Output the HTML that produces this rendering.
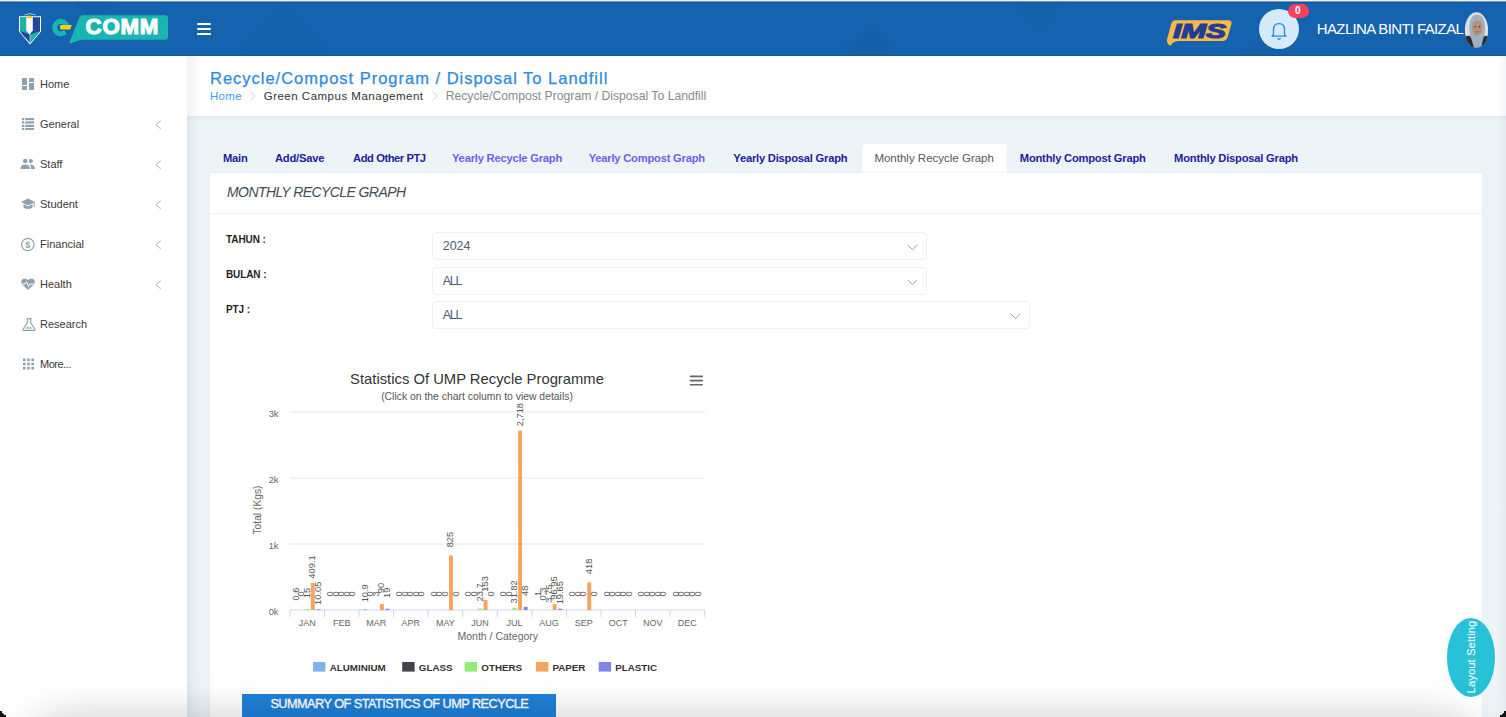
<!DOCTYPE html><html><head><meta charset="utf-8"><style>
*{margin:0;padding:0;box-sizing:border-box}
html,body{width:1506px;height:717px;overflow:hidden;background:#edf4f8;font-family:"Liberation Sans",sans-serif;position:relative}
.abs{position:absolute}
.t{position:absolute;white-space:nowrap;line-height:1}
#hdr{position:absolute;left:0;top:0;width:1506px;height:56px;background:#1563ae;border-top:1px solid #faf4e6;overflow:hidden}
#hdr .tl{position:absolute;left:0;top:0;width:100%;height:1px;background:#7c9cc2}
#hdr .tl2{position:absolute;left:0;top:1px;width:100%;height:1px;background:#0b58a9}
#hdr .bot{position:absolute;left:0;bottom:0;width:100%;height:1px;background:#0d58a6}
#hdr .t{margin-top:-1px}
#hdr .abs{margin-top:-1px}
.dia{position:absolute;background:rgba(10,60,120,.08);transform:rotate(45deg)}
#side{position:absolute;left:0;top:56px;width:187px;height:661px;background:#fff}
#side .t,#side .abs{margin-top:-56px}
#ptitle{position:absolute;left:187px;top:56px;width:1319px;height:60px;background:#fff}
#card{position:absolute;left:210px;top:173px;width:1272px;height:544px;background:#fff;box-shadow:0 -1px 2px rgba(60,80,100,.05)}
.sel{position:absolute;left:432px;height:28px;border:1px solid #eef1f4;border-radius:4px;background:#fff}
</style></head><body><div id="hdr"><div class="tl"></div><div class="tl2"></div><div class="dia" style="left:70px;top:-40px;width:50px;height:50px"></div><div class="dia" style="left:250px;top:20px;width:70px;height:70px;opacity:.5"></div><div class="dia" style="left:853px;top:29px;width:35px;height:35px"></div><div class="dia" style="left:1010px;top:-45px;width:60px;height:60px;opacity:.5"></div><div class="dia" style="left:1240px;top:40px;width:50px;height:50px"></div><svg class="abs" style="left:17px;top:12px" width="26" height="34" viewBox="0 0 26 34">
<path d="M2 4.2 L24 4.2 L24 19.5 L13 32.6 L2 19.5 Z" fill="#fff"/>
<path d="M3 5.2 L23 5.2 L23 19.2 L13 31 L3 19.2 Z" fill="#24459b"/>
<path d="M3 5.2 L9.2 5.2 L9.2 18.5 L13 22.5 L3 19.2 Z" fill="#1ab3a8"/>
<path d="M13 22.5 L23 19.2 L13 31 Z" fill="#1ab3a8"/>
<path d="M3 19.2 L13 22.5 L8 25.5 Z" fill="#24459b"/>
<path d="M9.2 5.2 L15.8 5.2 L15.8 18.5 L12.5 22.8 L9.2 18.5 Z" fill="#fff"/>
<path d="M13 22.5 L13 31" stroke="#fff" stroke-width="0.5"/>
<ellipse cx="12.5" cy="5" rx="2.8" ry="1.5" fill="#f5d21c"/>
<path d="M7.5 3.2 Q13 0.2 18.5 2.8" stroke="#a8d4ea" stroke-width="0.9" fill="none"/>
</svg><svg class="abs" style="left:50px;top:13px" width="122" height="33" viewBox="0 0 122 33">
<path d="M16.27 11.69 A6.2 6.2 0 1 0 13.71 20.07" stroke="#19b5b0" stroke-width="5" fill="none" stroke-linecap="round"/>
<path d="M10.5 12.1 L21.8 12.1 L20.2 16.4 L10.5 16.4 Q9.2 14.25 10.5 12.1Z" fill="#f7d10d"/>
<path d="M29.3 4.6 Q30.3 2.2 33 2.2 L115 2.2 Q118 2.2 118 5.2 L118 23.8 Q118 26.8 115 26.8 L32 26.8 Q26 28 21 30.2 Q18.5 31 19.8 28.5 Z" fill="#19b5b0"/>
</svg><div class="t" style="left:85.60px;top:16.32px;font-size:22.3px;color:#fff;font-weight:bold;font-style:normal;letter-spacing:0.7px;-webkit-text-stroke:1.1px #fff;">COMM</div><div class="abs" style="left:196.5px;top:22.6px;width:14px;height:2px;background:#fff;border-radius:1px"></div><div class="abs" style="left:196.5px;top:27.6px;width:14px;height:2px;background:#fff;border-radius:1px"></div><div class="abs" style="left:196.5px;top:32.6px;width:14px;height:2px;background:#fff;border-radius:1px"></div><svg class="abs" style="left:1165px;top:19px" width="68" height="28" viewBox="0 0 68 28">
<path d="M10 1.2 L63 1.2 Q67.5 1.2 66.3 5.5 L62.5 18.5 Q61.3 22 57.5 22 L13 22 Q8 22.5 6.5 25.5 Q5 27.5 3.5 25.5 Q1 22.5 2.5 18.5 L6.2 5 Q7.2 1.2 10 1.2Z" fill="#f8b945"/>
<text x="8" y="18.6" font-family="Liberation Sans" font-weight="bold" font-style="italic" font-size="19.5" fill="#1f3f95" stroke="#1f3f95" stroke-width="1.2" textLength="53" lengthAdjust="spacingAndGlyphs">IMS</text>
</svg><div class="abs" style="left:1258.7px;top:9.4px;width:40px;height:40px;border-radius:50%;background:#d5ebfc"></div><svg class="abs" style="left:1270px;top:21px" width="18" height="20" viewBox="0 0 18 20">
<path d="M3.5 13.8 L3.5 8.5 Q3.5 2.6 9 2.6 Q14.5 2.6 14.5 8.5 L14.5 13.8 L16 15.2 L2 15.2 Z" stroke="#2a86e2" stroke-width="1.3" fill="none" stroke-linejoin="round"/>
<path d="M7.4 17.2 L9 18.4 L10.6 17.2" stroke="#2a86e2" stroke-width="1.2" fill="none"/>
</svg><div class="abs" style="left:1287.5px;top:3.5px;width:21.5px;height:14px;border-radius:7px;background:#f4415f"></div><div class="t" style="left:1295.00px;top:6.34px;font-size:10px;color:#fff;font-weight:bold;font-style:normal;letter-spacing:0px;">0</div><div class="t" style="left:1316.80px;top:21.20px;font-size:15px;color:#fff;font-weight:normal;font-style:normal;letter-spacing:-0.64px;">HAZLINA BINTI FAIZAL</div><svg class="abs" style="left:1463.7px;top:11.5px" width="25" height="36" viewBox="0 0 25 36">
<defs><clipPath id="av"><ellipse cx="12.5" cy="18" rx="11.6" ry="17.8"/></clipPath></defs>
<g clip-path="url(#av)">
<rect width="25" height="36" fill="#e2dfdc"/>
<path d="M0 36 L0 25 Q6 22 12 26 L13 36Z" fill="#2a2a2c"/>
<path d="M25 36 L25 25 Q19 22 13 26 L12 36Z" fill="#2a2a2c"/>
<path d="M9 36 L6 26 L5.2 14 Q6 2.5 13 2.5 Q20.5 2.5 21 14 L20.5 26 L17.5 36Z" fill="#9fb0c6"/>
<path d="M0 36 L0 26 Q4 23.5 7 25.5 L10 36Z" fill="#2a2a2c"/><path d="M25 36 L25 26 Q21 23.5 19.5 25.5 L17 36Z" fill="#2a2a2c"/>
<ellipse cx="13.2" cy="15.6" rx="5.2" ry="8" fill="#b78f76"/>
<path d="M8 11 Q13 6 18.5 11 L18.5 8 Q13 4 8 8Z" fill="#9fb0c6"/>
<circle cx="11.2" cy="14.8" r="0.7" fill="#3a2a22"/><circle cx="15.4" cy="14.8" r="0.7" fill="#3a2a22"/>
<path d="M11.3 19.6 Q13.2 20.8 15.1 19.6" stroke="#7a4a3a" stroke-width="0.6" fill="none"/>
</g></svg><div class="bot"></div></div>
<div id="side"><svg class="abs" style="left:21.5px;top:78px" width="15" height="14" viewBox="0 0 15 14" overflow="visible"><rect x="0" y="0" width="5" height="7" fill="#8fa2ac"/><rect x="7" y="0" width="5" height="4" fill="#8fa2ac"/><rect x="0" y="8" width="5" height="4" fill="#8fa2ac"/><rect x="7" y="5" width="5" height="7" fill="#8fa2ac"/></svg><div class="t" style="left:40.00px;top:78.89px;font-size:11px;color:#3a3a3a;font-weight:normal;font-style:normal;letter-spacing:0px;">Home</div><svg class="abs" style="left:21.5px;top:118px" width="15" height="14" viewBox="0 0 15 14" overflow="visible"><rect x="0" y="0" width="2.2" height="2.2" fill="#8fa2ac"/><rect x="3.2" y="0" width="8.8" height="2.2" fill="#8fa2ac"/><rect x="0" y="3.4" width="2.2" height="2.2" fill="#8fa2ac"/><rect x="3.2" y="3.4" width="8.8" height="2.2" fill="#8fa2ac"/><rect x="0" y="6.8" width="2.2" height="2.2" fill="#8fa2ac"/><rect x="3.2" y="6.8" width="8.8" height="2.2" fill="#8fa2ac"/><rect x="0" y="10" width="2.2" height="2" fill="#8fa2ac"/><rect x="3.2" y="10" width="8.8" height="2" fill="#8fa2ac"/></svg><div class="t" style="left:40.00px;top:118.89px;font-size:11px;color:#3a3a3a;font-weight:normal;font-style:normal;letter-spacing:0px;">General</div><svg class="abs" style="left:155px;top:119.5px" width="7" height="10" viewBox="0 0 7 10"><path d="M5.8 0.6 L1 4.8 L5.8 9" stroke="#9aabb5" stroke-width="0.9" fill="none"/></svg><svg class="abs" style="left:20.7px;top:158px" width="15" height="14" viewBox="0 0 15 14" overflow="visible"><circle cx="4.2" cy="3" r="2.3" fill="#8fa2ac"/><circle cx="9.8" cy="3" r="2.1" fill="#8fa2ac"/><path d="M-0.5 11 Q-0.5 6.5 4.2 6.5 Q8.9 6.5 8.9 11Z" fill="#8fa2ac"/><path d="M9 6.5 Q14 6.5 14 11 L10 11 Q10 8 9 6.5Z" fill="#8fa2ac"/></svg><div class="t" style="left:40.00px;top:158.89px;font-size:11px;color:#3a3a3a;font-weight:normal;font-style:normal;letter-spacing:0px;">Staff</div><svg class="abs" style="left:155px;top:159.5px" width="7" height="10" viewBox="0 0 7 10"><path d="M5.8 0.6 L1 4.8 L5.8 9" stroke="#9aabb5" stroke-width="0.9" fill="none"/></svg><svg class="abs" style="left:20.7px;top:198px" width="15" height="14" viewBox="0 0 15 14" overflow="visible"><path d="M7 0.5 L14 4 L7 7.5 L0 4Z" fill="#8fa2ac"/><path d="M2.5 6 L2.5 9.5 Q7 12.5 11.5 9.5 L11.5 6 L7 8.5Z" fill="#8fa2ac"/><rect x="12.8" y="4" width="0.9" height="5" fill="#8fa2ac"/></svg><div class="t" style="left:40.00px;top:198.89px;font-size:11px;color:#3a3a3a;font-weight:normal;font-style:normal;letter-spacing:0px;">Student</div><svg class="abs" style="left:155px;top:199.5px" width="7" height="10" viewBox="0 0 7 10"><path d="M5.8 0.6 L1 4.8 L5.8 9" stroke="#9aabb5" stroke-width="0.9" fill="none"/></svg><svg class="abs" style="left:20.7px;top:238px" width="15" height="14" viewBox="0 0 15 14" overflow="visible"><circle cx="6.8" cy="6.5" r="6.2" fill="none" stroke="#8fa2ac" stroke-width="1.3"/><text x="6.8" y="9.7" font-size="9" text-anchor="middle" fill="#8fa2ac" font-family="Liberation Sans" font-weight="bold">$</text></svg><div class="t" style="left:40.00px;top:238.89px;font-size:11px;color:#3a3a3a;font-weight:normal;font-style:normal;letter-spacing:0px;">Financial</div><svg class="abs" style="left:155px;top:239.5px" width="7" height="10" viewBox="0 0 7 10"><path d="M5.8 0.6 L1 4.8 L5.8 9" stroke="#9aabb5" stroke-width="0.9" fill="none"/></svg><svg class="abs" style="left:20.7px;top:278px" width="15" height="14" viewBox="0 0 15 14" overflow="visible"><path d="M7 12 L1.2 6.5 Q-1 3.5 1.5 1.2 Q4.5 -0.8 7 2.2 Q9.5 -0.8 12.5 1.2 Q15 3.5 12.8 6.5Z" fill="#8fa2ac"/><path d="M0 6 L4 6 L5.5 3.8 L7.5 8.5 L9 6 L14 6" stroke="#fff" stroke-width="1" fill="none"/></svg><div class="t" style="left:40.00px;top:278.89px;font-size:11px;color:#3a3a3a;font-weight:normal;font-style:normal;letter-spacing:0px;">Health</div><svg class="abs" style="left:155px;top:279.5px" width="7" height="10" viewBox="0 0 7 10"><path d="M5.8 0.6 L1 4.8 L5.8 9" stroke="#9aabb5" stroke-width="0.9" fill="none"/></svg><svg class="abs" style="left:21.5px;top:318px" width="15" height="14" viewBox="0 0 15 14" overflow="visible"><path d="M4.5 0.6 L9.5 0.6 M5.3 0.6 L5.3 4.8 L1 11.2 Q0.7 12.4 2 12.4 L12 12.4 Q13.3 12.4 13 11.2 L8.7 4.8 L8.7 0.6" stroke="#8fa2ac" stroke-width="1.1" fill="none"/><path d="M3.5 10.5 L5.5 8.5 L7 10 L8.5 8.8 L10.5 10.5Z" fill="#8fa2ac"/></svg><div class="t" style="left:40.00px;top:318.89px;font-size:11px;color:#3a3a3a;font-weight:normal;font-style:normal;letter-spacing:0px;">Research</div><svg class="abs" style="left:21.5px;top:358px" width="15" height="14" viewBox="0 0 15 14" overflow="visible"><rect x="1.0" y="0.5" width="2.6" height="2.6" fill="#8fa2ac"/><rect x="5.2" y="0.5" width="2.6" height="2.6" fill="#8fa2ac"/><rect x="9.4" y="0.5" width="2.6" height="2.6" fill="#8fa2ac"/><rect x="1.0" y="4.7" width="2.6" height="2.6" fill="#8fa2ac"/><rect x="5.2" y="4.7" width="2.6" height="2.6" fill="#8fa2ac"/><rect x="9.4" y="4.7" width="2.6" height="2.6" fill="#8fa2ac"/><rect x="1.0" y="8.9" width="2.6" height="2.6" fill="#8fa2ac"/><rect x="5.2" y="8.9" width="2.6" height="2.6" fill="#8fa2ac"/><rect x="9.4" y="8.9" width="2.6" height="2.6" fill="#8fa2ac"/></svg><div class="t" style="left:40.00px;top:358.89px;font-size:11px;color:#3a3a3a;font-weight:normal;font-style:normal;letter-spacing:-0.5px;">More...</div></div>
<div id="ptitle"></div>
<div class="abs" style="left:187px;top:116px;width:1319px;height:4px;background:linear-gradient(rgba(90,110,130,.07),rgba(90,110,130,0))"></div>
<div class="t" style="left:210.00px;top:69.63px;font-size:16.5px;color:#2a8be2;font-weight:normal;font-style:normal;letter-spacing:0.99px;-webkit-text-stroke:0.25px #2a8be2;">Recycle/Compost Program / Disposal To Landfill</div>
<div class="t" style="left:210.00px;top:90.87px;font-size:11.5px;color:#3b9cf1;font-weight:normal;font-style:normal;letter-spacing:0.3px;">Home</div>
<svg class="abs" style="left:250px;top:91px" width="6" height="10" viewBox="0 0 6 10"><path d="M1 1 L4.8 5 L1 9" stroke="#c9ced3" stroke-width="0.9" fill="none"/></svg>
<div class="t" style="left:263.70px;top:90.87px;font-size:11.5px;color:#333;font-weight:normal;font-style:normal;letter-spacing:0.5px;">Green Campus Management</div>
<svg class="abs" style="left:432px;top:91px" width="6" height="10" viewBox="0 0 6 10"><path d="M1 1 L4.8 5 L1 9" stroke="#c9ced3" stroke-width="0.9" fill="none"/></svg>
<div class="t" style="left:445.70px;top:90.27px;font-size:12.2px;color:#858a8f;font-weight:normal;font-style:normal;letter-spacing:0px;">Recycle/Compost Program / Disposal To Landfill</div>
<div class="abs" style="left:861.6px;top:144px;width:145px;height:30px;background:#fff;border-radius:4px 4px 0 0"></div>
<div class="t" style="left:222.90px;top:152.92px;font-size:11.2px;color:#1e209c;font-weight:bold;font-style:normal;letter-spacing:-0.22px;">Main</div>
<div class="t" style="left:275.00px;top:152.92px;font-size:11.2px;color:#1e209c;font-weight:bold;font-style:normal;letter-spacing:-0.22px;">Add/Save</div>
<div class="t" style="left:353.10px;top:152.92px;font-size:11.2px;color:#1e209c;font-weight:bold;font-style:normal;letter-spacing:-0.45px;">Add Other PTJ</div>
<div class="t" style="left:452.00px;top:152.92px;font-size:11.2px;color:#705ee6;font-weight:bold;font-style:normal;letter-spacing:-0.22px;">Yearly Recycle Graph</div>
<div class="t" style="left:588.70px;top:152.92px;font-size:11.2px;color:#705ee6;font-weight:bold;font-style:normal;letter-spacing:-0.22px;">Yearly Compost Graph</div>
<div class="t" style="left:733.30px;top:152.92px;font-size:11.2px;color:#1e209c;font-weight:bold;font-style:normal;letter-spacing:-0.22px;">Yearly Disposal Graph</div>
<div class="t" style="left:1019.80px;top:152.92px;font-size:11.2px;color:#1e209c;font-weight:bold;font-style:normal;letter-spacing:-0.22px;">Monthly Compost Graph</div>
<div class="t" style="left:1174.10px;top:152.92px;font-size:11.2px;color:#1e209c;font-weight:bold;font-style:normal;letter-spacing:-0.22px;">Monthly Disposal Graph</div>
<div class="t" style="left:874.40px;top:152.57px;font-size:11.5px;color:#4f5766;font-weight:normal;font-style:normal;letter-spacing:0px;">Monthly Recycle Graph</div>
<div id="card"></div>
<div class="abs" style="left:210px;top:213px;width:1272px;height:1px;background:#f1f3f5"></div>
<div class="t" style="left:227.00px;top:185.45px;font-size:14px;color:#3f4b55;font-weight:normal;font-style:italic;letter-spacing:-0.58px;">MONTHLY RECYCLE GRAPH</div>
<div class="t" style="left:226.00px;top:235.23px;font-size:10px;color:#1f1f1f;font-weight:bold;font-style:normal;letter-spacing:-0.1px;">TAHUN :</div>
<div class="t" style="left:226.00px;top:269.94px;font-size:10px;color:#1f1f1f;font-weight:bold;font-style:normal;letter-spacing:-0.1px;">BULAN :</div>
<div class="t" style="left:226.00px;top:304.54px;font-size:10px;color:#1f1f1f;font-weight:bold;font-style:normal;letter-spacing:-0.1px;">PTJ :</div>
<div class="sel" style="top:232px;width:494.5px"></div><div class="t" style="left:442.70px;top:239.82px;font-size:12.5px;color:#4d5c77;font-weight:normal;font-style:normal;letter-spacing:0px;">2024</div><svg class="abs" style="left:907.0px;top:244px" width="11" height="7" viewBox="0 0 11 7"><path d="M0.6 0.8 L5.5 5.6 L10.4 0.8" stroke="#9ba3ad" stroke-width="1" fill="none"/></svg>
<div class="sel" style="top:267px;width:494.5px"></div><div class="t" style="left:442.70px;top:274.82px;font-size:12.5px;color:#4d5c77;font-weight:normal;font-style:normal;letter-spacing:-1.3px;">ALL</div><svg class="abs" style="left:907.0px;top:279px" width="11" height="7" viewBox="0 0 11 7"><path d="M0.6 0.8 L5.5 5.6 L10.4 0.8" stroke="#9ba3ad" stroke-width="1" fill="none"/></svg>
<div class="sel" style="top:301.3px;width:597.5px"></div><div class="t" style="left:442.70px;top:309.12px;font-size:12.5px;color:#4d5c77;font-weight:normal;font-style:normal;letter-spacing:-1.3px;">ALL</div><svg class="abs" style="left:1010.0px;top:313.3px" width="11" height="7" viewBox="0 0 11 7"><path d="M0.6 0.8 L5.5 5.6 L10.4 0.8" stroke="#9ba3ad" stroke-width="1" fill="none"/></svg>
<svg class="abs" style="left:0;top:0" width="1506" height="717" viewBox="0 0 1506 717" font-family="Liberation Sans"><text x="477" y="383.9" text-anchor="middle" font-size="14.8" fill="#333">Statistics Of UMP Recycle Programme</text><text x="477" y="399.8" text-anchor="middle" font-size="10.4" fill="#555">(Click on the chart column to view details)</text><rect x="689.6" y="375.5" width="13.5" height="1.7" rx="0.8" fill="#666"/><rect x="689.6" y="379.7" width="13.5" height="1.7" rx="0.8" fill="#666"/><rect x="689.6" y="383.9" width="13.5" height="1.7" rx="0.8" fill="#666"/><rect x="290" y="411.5" width="415" height="1" fill="#e6e6e6"/><text x="278.5" y="416.5" text-anchor="end" font-size="9.3" fill="#666">3k</text><rect x="290" y="477.5" width="415" height="1" fill="#e6e6e6"/><text x="278.5" y="482.5" text-anchor="end" font-size="9.3" fill="#666">2k</text><rect x="290" y="543.5" width="415" height="1" fill="#e6e6e6"/><text x="278.5" y="548.5" text-anchor="end" font-size="9.3" fill="#666">1k</text><text x="278.5" y="614.5" text-anchor="end" font-size="9.3" fill="#666">0k</text><rect x="290" y="609.5" width="415" height="1" fill="#ccd6eb"/><rect x="289.40" y="610" width="1" height="7" fill="#ccd6eb"/><rect x="323.96" y="610" width="1" height="7" fill="#ccd6eb"/><rect x="358.52" y="610" width="1" height="7" fill="#ccd6eb"/><rect x="393.08" y="610" width="1" height="7" fill="#ccd6eb"/><rect x="427.64" y="610" width="1" height="7" fill="#ccd6eb"/><rect x="462.20" y="610" width="1" height="7" fill="#ccd6eb"/><rect x="496.76" y="610" width="1" height="7" fill="#ccd6eb"/><rect x="531.32" y="610" width="1" height="7" fill="#ccd6eb"/><rect x="565.88" y="610" width="1" height="7" fill="#ccd6eb"/><rect x="600.44" y="610" width="1" height="7" fill="#ccd6eb"/><rect x="635.00" y="610" width="1" height="7" fill="#ccd6eb"/><rect x="669.56" y="610" width="1" height="7" fill="#ccd6eb"/><rect x="704.12" y="610" width="1" height="7" fill="#ccd6eb"/><text x="307.18" y="625.7" text-anchor="middle" font-size="9" fill="#666">JAN</text><text x="341.74" y="625.7" text-anchor="middle" font-size="9" fill="#666">FEB</text><text x="376.30" y="625.7" text-anchor="middle" font-size="9" fill="#666">MAR</text><text x="410.86" y="625.7" text-anchor="middle" font-size="9" fill="#666">APR</text><text x="445.42" y="625.7" text-anchor="middle" font-size="9" fill="#666">MAY</text><text x="479.98" y="625.7" text-anchor="middle" font-size="9" fill="#666">JUN</text><text x="514.54" y="625.7" text-anchor="middle" font-size="9" fill="#666">JUL</text><text x="549.10" y="625.7" text-anchor="middle" font-size="9" fill="#666">AUG</text><text x="583.66" y="625.7" text-anchor="middle" font-size="9" fill="#666">SEP</text><text x="618.22" y="625.7" text-anchor="middle" font-size="9" fill="#666">OCT</text><text x="652.78" y="625.7" text-anchor="middle" font-size="9" fill="#666">NOV</text><text x="687.34" y="625.7" text-anchor="middle" font-size="9" fill="#666">DEC</text><text x="497.8" y="639.5" text-anchor="middle" font-size="10.5" fill="#666">Month / Category</text><text transform="translate(260.8,510) rotate(-90)" text-anchor="middle" font-size="10.25" fill="#666">Total (Kgs)</text><rect x="305.25" y="609.01" width="3.9" height="0.99" fill="#90ed7d"/><rect x="310.80" y="583.00" width="3.9" height="27.00" fill="#f7a35c"/><rect x="316.35" y="609.34" width="3.9" height="0.66" fill="#8085e9"/><rect x="363.27" y="609.28" width="3.9" height="0.72" fill="#7cb5ec"/><rect x="379.92" y="604.06" width="3.9" height="5.94" fill="#f7a35c"/><rect x="385.47" y="608.75" width="3.9" height="1.25" fill="#8085e9"/><rect x="449.04" y="555.55" width="3.9" height="54.45" fill="#f7a35c"/><rect x="478.05" y="608.44" width="3.9" height="1.56" fill="#90ed7d"/><rect x="483.60" y="599.90" width="3.9" height="10.10" fill="#f7a35c"/><rect x="512.61" y="607.90" width="3.9" height="2.10" fill="#90ed7d"/><rect x="518.16" y="430.61" width="3.9" height="179.39" fill="#f7a35c"/><rect x="523.71" y="606.83" width="3.9" height="3.17" fill="#8085e9"/><rect x="552.72" y="604.06" width="3.9" height="5.94" fill="#f7a35c"/><rect x="558.27" y="608.70" width="3.9" height="1.30" fill="#8085e9"/><rect x="587.28" y="582.41" width="3.9" height="27.59" fill="#f7a35c"/><text transform="translate(298.60,593.96) rotate(-90)" text-anchor="middle" font-size="9.3" fill="#555">0.6</text><text transform="translate(304.15,594.00) rotate(-90)" text-anchor="middle" font-size="9.3" fill="#555">0</text><text transform="translate(309.70,593.01) rotate(-90)" text-anchor="middle" font-size="9.3" fill="#555">15</text><text transform="translate(315.25,567.00) rotate(-90)" text-anchor="middle" font-size="9.3" fill="#555">409.1</text><text transform="translate(320.80,593.34) rotate(-90)" text-anchor="middle" font-size="9.3" fill="#555">10.05</text><text transform="translate(333.16,594.00) rotate(-90)" text-anchor="middle" font-size="9.3" fill="#555">0</text><text transform="translate(338.71,594.00) rotate(-90)" text-anchor="middle" font-size="9.3" fill="#555">0</text><text transform="translate(344.26,594.00) rotate(-90)" text-anchor="middle" font-size="9.3" fill="#555">0</text><text transform="translate(349.81,594.00) rotate(-90)" text-anchor="middle" font-size="9.3" fill="#555">0</text><text transform="translate(355.36,594.00) rotate(-90)" text-anchor="middle" font-size="9.3" fill="#555">0</text><text transform="translate(367.72,593.28) rotate(-90)" text-anchor="middle" font-size="9.3" fill="#555">10.9</text><text transform="translate(373.27,594.00) rotate(-90)" text-anchor="middle" font-size="9.3" fill="#555">0</text><text transform="translate(378.82,593.80) rotate(-90)" text-anchor="middle" font-size="9.3" fill="#555">3</text><text transform="translate(384.37,588.06) rotate(-90)" text-anchor="middle" font-size="9.3" fill="#555">90</text><text transform="translate(389.92,592.75) rotate(-90)" text-anchor="middle" font-size="9.3" fill="#555">19</text><text transform="translate(402.28,594.00) rotate(-90)" text-anchor="middle" font-size="9.3" fill="#555">0</text><text transform="translate(407.83,594.00) rotate(-90)" text-anchor="middle" font-size="9.3" fill="#555">0</text><text transform="translate(413.38,594.00) rotate(-90)" text-anchor="middle" font-size="9.3" fill="#555">0</text><text transform="translate(418.93,594.00) rotate(-90)" text-anchor="middle" font-size="9.3" fill="#555">0</text><text transform="translate(424.48,594.00) rotate(-90)" text-anchor="middle" font-size="9.3" fill="#555">0</text><text transform="translate(436.84,594.00) rotate(-90)" text-anchor="middle" font-size="9.3" fill="#555">0</text><text transform="translate(442.39,594.00) rotate(-90)" text-anchor="middle" font-size="9.3" fill="#555">0</text><text transform="translate(447.94,594.00) rotate(-90)" text-anchor="middle" font-size="9.3" fill="#555">0</text><text transform="translate(453.49,539.55) rotate(-90)" text-anchor="middle" font-size="9.3" fill="#555">825</text><text transform="translate(459.04,594.00) rotate(-90)" text-anchor="middle" font-size="9.3" fill="#555">0</text><text transform="translate(471.40,594.00) rotate(-90)" text-anchor="middle" font-size="9.3" fill="#555">0</text><text transform="translate(476.95,594.00) rotate(-90)" text-anchor="middle" font-size="9.3" fill="#555">0</text><text transform="translate(482.50,592.44) rotate(-90)" text-anchor="middle" font-size="9.3" fill="#555">23.7</text><text transform="translate(488.05,583.90) rotate(-90)" text-anchor="middle" font-size="9.3" fill="#555">153</text><text transform="translate(493.60,594.00) rotate(-90)" text-anchor="middle" font-size="9.3" fill="#555">0</text><text transform="translate(505.96,594.00) rotate(-90)" text-anchor="middle" font-size="9.3" fill="#555">0</text><text transform="translate(511.51,594.00) rotate(-90)" text-anchor="middle" font-size="9.3" fill="#555">0</text><text transform="translate(517.06,591.90) rotate(-90)" text-anchor="middle" font-size="9.3" fill="#555">31.82</text><text transform="translate(522.61,414.61) rotate(-90)" text-anchor="middle" font-size="9.3" fill="#555">2,718</text><text transform="translate(528.16,590.83) rotate(-90)" text-anchor="middle" font-size="9.3" fill="#555">48</text><text transform="translate(540.52,593.93) rotate(-90)" text-anchor="middle" font-size="9.3" fill="#555">1</text><text transform="translate(546.07,593.98) rotate(-90)" text-anchor="middle" font-size="9.3" fill="#555">0.3</text><text transform="translate(551.62,593.75) rotate(-90)" text-anchor="middle" font-size="9.3" fill="#555">3.75</text><text transform="translate(557.17,588.06) rotate(-90)" text-anchor="middle" font-size="9.3" fill="#555">96.95</text><text transform="translate(562.72,592.70) rotate(-90)" text-anchor="middle" font-size="9.3" fill="#555">19.65</text><text transform="translate(575.08,594.00) rotate(-90)" text-anchor="middle" font-size="9.3" fill="#555">0</text><text transform="translate(580.63,594.00) rotate(-90)" text-anchor="middle" font-size="9.3" fill="#555">0</text><text transform="translate(586.18,594.00) rotate(-90)" text-anchor="middle" font-size="9.3" fill="#555">0</text><text transform="translate(591.73,566.41) rotate(-90)" text-anchor="middle" font-size="9.3" fill="#555">418</text><text transform="translate(597.28,594.00) rotate(-90)" text-anchor="middle" font-size="9.3" fill="#555">0</text><text transform="translate(609.64,594.00) rotate(-90)" text-anchor="middle" font-size="9.3" fill="#555">0</text><text transform="translate(615.19,594.00) rotate(-90)" text-anchor="middle" font-size="9.3" fill="#555">0</text><text transform="translate(620.74,594.00) rotate(-90)" text-anchor="middle" font-size="9.3" fill="#555">0</text><text transform="translate(626.29,594.00) rotate(-90)" text-anchor="middle" font-size="9.3" fill="#555">0</text><text transform="translate(631.84,594.00) rotate(-90)" text-anchor="middle" font-size="9.3" fill="#555">0</text><text transform="translate(644.20,594.00) rotate(-90)" text-anchor="middle" font-size="9.3" fill="#555">0</text><text transform="translate(649.75,594.00) rotate(-90)" text-anchor="middle" font-size="9.3" fill="#555">0</text><text transform="translate(655.30,594.00) rotate(-90)" text-anchor="middle" font-size="9.3" fill="#555">0</text><text transform="translate(660.85,594.00) rotate(-90)" text-anchor="middle" font-size="9.3" fill="#555">0</text><text transform="translate(666.40,594.00) rotate(-90)" text-anchor="middle" font-size="9.3" fill="#555">0</text><text transform="translate(678.76,594.00) rotate(-90)" text-anchor="middle" font-size="9.3" fill="#555">0</text><text transform="translate(684.31,594.00) rotate(-90)" text-anchor="middle" font-size="9.3" fill="#555">0</text><text transform="translate(689.86,594.00) rotate(-90)" text-anchor="middle" font-size="9.3" fill="#555">0</text><text transform="translate(695.41,594.00) rotate(-90)" text-anchor="middle" font-size="9.3" fill="#555">0</text><text transform="translate(700.96,594.00) rotate(-90)" text-anchor="middle" font-size="9.3" fill="#555">0</text><rect x="313" y="662" width="12.4" height="9.6" fill="#7cb5ec"/><text x="329.7" y="671.1" font-size="9.8" font-weight="bold" fill="#333">ALUMINIUM</text><rect x="402.2" y="662" width="12.4" height="9.6" fill="#434348"/><text x="418.8" y="671.1" font-size="9.8" font-weight="bold" fill="#333">GLASS</text><rect x="464.6" y="662" width="12.4" height="9.6" fill="#90ed7d"/><text x="481.3" y="671.1" font-size="9.8" font-weight="bold" fill="#333">OTHERS</text><rect x="536" y="662" width="12.4" height="9.6" fill="#f7a35c"/><text x="552.4" y="671.1" font-size="9.8" font-weight="bold" fill="#333">PAPER</text><rect x="598.7" y="662" width="12.4" height="9.6" fill="#8085e9"/><text x="615.2" y="671.1" font-size="9.8" font-weight="bold" fill="#333">PLASTIC</text></svg>
<div class="abs" style="left:241.7px;top:693.5px;width:314.5px;height:30px;background:#1f80d9"></div>
<div class="t" style="left:270.40px;top:697.65px;font-size:12.7px;color:#fff;font-weight:normal;font-style:normal;letter-spacing:-0.52px;-webkit-text-stroke:0.35px #fff;">SUMMARY OF STATISTICS OF UMP RECYCLE</div>
<div class="abs" style="left:1447.3px;top:618.2px;width:47.4px;height:78.4px;border-radius:50%;background:#29c1d8"></div>
<div class="t" style="left:1472px;top:657.4px;font-size:11.4px;color:#fff;transform:translate(-50%,-50%) rotate(-90deg)">Layout Setting</div>
<div class="abs" style="left:187px;top:56px;width:14px;height:661px;background:linear-gradient(to right,rgba(120,130,140,.10),rgba(120,130,140,0))"></div>
<div class="abs" style="left:1498px;top:56px;width:8px;height:661px;background:linear-gradient(to right,rgba(100,120,140,0),rgba(100,120,140,.08))"></div>
<div class="abs" style="left:30px;top:728px;width:1446px;height:80px;border-radius:60px;box-shadow:0 0 42px 10px rgba(0,0,0,.22)"></div>
<div class="abs" style="left:1500px;top:711px;width:6px;height:6px;background:radial-gradient(circle at 0 0,transparent 3.8px,#111 4.3px)"></div>
<div class="abs" style="left:0;top:711px;width:6px;height:6px;background:radial-gradient(circle at 100% 0,transparent 3.8px,#111 4.3px)"></div></body></html>
